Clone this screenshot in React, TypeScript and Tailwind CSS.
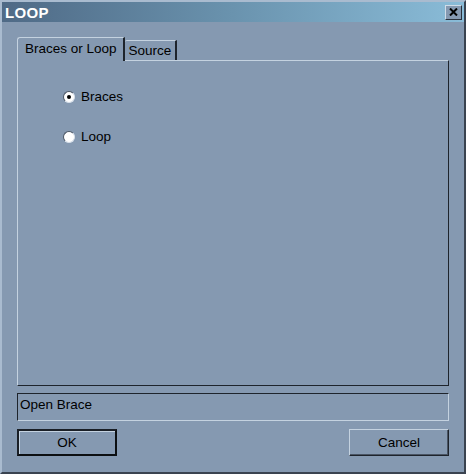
import { useState } from "react";

function Radio({ checked, label, onClick }: { checked: boolean; label: string; onClick: () => void }) {
  return (
    <button onClick={onClick} className="flex items-center gap-[6px] text-left">
      <span className="relative flex h-[12px] w-[12px] items-center justify-center rounded-full border border-t-[#4a5564] border-l-[#4a5564] border-r-[#d8e0ea] border-b-[#d8e0ea] bg-white">
        {checked && <span className="h-[4px] w-[4px] rounded-full bg-black" />}
      </span>
      <span className="text-[13.5px] leading-[16px] text-black">{label}</span>
    </button>
  );
}

export default function App() {
  const [choice, setChoice] = useState<"braces" | "loop">("braces");

  return (
    <div
      className="flex h-[474px] w-[466px] flex-col border-2 border-t-[#a9bbcf] border-l-[#a9bbcf] border-r-[#3a4350] border-b-[#3a4350] bg-[#8599b1] text-black"
      style={{ fontFamily: '"Liberation Sans", Arial, sans-serif' }}
    >
      {/* title bar */}
      <div className="flex h-[20px] items-center justify-between bg-gradient-to-r from-[#4f6a86] via-[#6a93ae] to-[#8abcd8] pl-[3px] pr-[2px]">
        <span className="text-[15px] font-bold leading-none tracking-[0.3px] text-white">LOOP</span>
        <button className="flex h-[15px] w-[17px] items-center justify-center border border-t-[#d0dce8] border-l-[#d0dce8] border-r-[#2a323c] border-b-[#2a323c] bg-[#8599b1]">
          <svg width="9" height="8" viewBox="0 0 9 8">
            <path d="M1 0.5 L8 7.5 M8 0.5 L1 7.5" stroke="#000" strokeWidth="2" />
          </svg>
        </button>
      </div>

      <div className="flex flex-1 flex-col px-[15px] pt-[15px]">
        {/* tabs */}
        <div className="flex items-end">
          <div className="relative z-10 -mb-px flex h-[24px] items-center rounded-tl-[3px] border-t border-l border-r-2 border-t-[#c4d2e0] border-l-[#c4d2e0] border-r-[#1e242c] bg-[#8599b1] pl-[7px] pr-[6px] pb-[2px]">
            <span className="text-[13.5px] leading-none">Braces or Loop</span>
          </div>
          <div className="flex h-[20px] items-center rounded-tl-[2px] border-t border-r-2 border-t-[#c4d2e0] border-r-[#1e242c] pl-[4px] pr-[4px]">
            <span className="text-[13.5px] leading-none">Source</span>
          </div>
        </div>

        {/* panel */}
        <div className="flex h-[326px] flex-col gap-[24px] border border-t-[#c4d2e0] border-l-[#c4d2e0] border-r-[#1e242c] border-b-[#1e242c] pl-[45px] pt-[28px]">
          <Radio checked={choice === "braces"} label="Braces" onClick={() => setChoice("braces")} />
          <Radio checked={choice === "loop"} label="Loop" onClick={() => setChoice("loop")} />
        </div>

        {/* status */}
        <div className="mt-[7px] flex h-[28px] items-center border border-t-[#1e242c] border-l-[#1e242c] border-r-[#c4d2e0] border-b-[#c4d2e0] pl-[2px] pb-[5px]">
          <span className="text-[13.5px] leading-none">Open Brace</span>
        </div>

        {/* buttons */}
        <div className="mt-[8px] flex justify-between">
          <button className="flex h-[27px] w-[100px] items-center justify-center border-2 border-t-[#1a1f26] border-l-[#1a1f26] border-r-[#0c0f12] border-b-[#0c0f12] shadow-[inset_1px_1px_0_#c4d2e0]">
            <span className="text-[13.5px] leading-none">OK</span>
          </button>
          <button className="flex h-[27px] w-[100px] items-center justify-center border border-t-[#c4d2e0] border-l-[#c4d2e0] border-r-[#1e242c] border-b-[#1e242c] shadow-[inset_-1px_-1px_0_#4a5564]">
            <span className="text-[13.5px] leading-none">Cancel</span>
          </button>
        </div>
      </div>
    </div>
  );
}
